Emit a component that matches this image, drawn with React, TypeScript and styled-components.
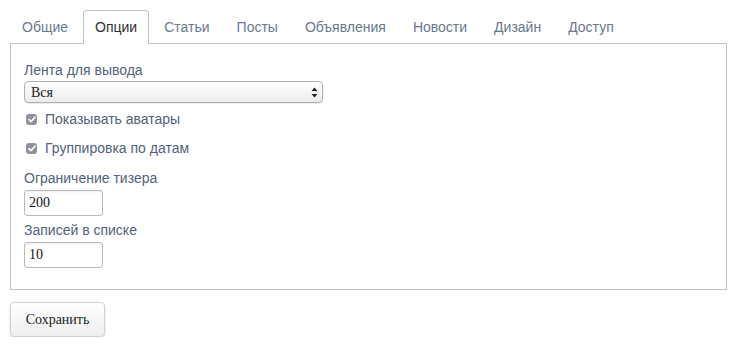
import * as React from 'react';
import styled, { createGlobalStyle } from 'styled-components';

const GlobalStyle = createGlobalStyle`
  html, body {
    margin: 0;
    padding: 0;
    background: #fff;
  }
  body {
    font-family: "Liberation Sans", Arial, sans-serif;
  }
`;

const Page = styled.div`
  padding: 10px 11px 0 10px;
`;

const TabBar = styled.ul`
  display: flex;
  list-style: none;
  margin: 0;
  padding: 0;
`;

const Tab = styled.li<{ active?: boolean }>`
  height: 34px;
  box-sizing: border-box;
  padding: 0 11px 1px 11px;
  margin-right: 3px;
  display: flex;
  align-items: center;
  font-size: 14px;
  color: ${p => (p.active ? '#2b2f36' : '#6a7890')};
  border: 1px solid ${p => (p.active ? '#b9c3cd' : 'transparent')};
  border-bottom: 0;
  border-radius: 4px 4px 0 0;
  background: ${p => (p.active ? '#fff' : 'transparent')};
  margin-bottom: -1px;
  position: relative;
  z-index: ${p => (p.active ? 1 : 0)};
  cursor: pointer;
`;

const Panel = styled.div`
  border: 1px solid #b9c3cd;
  height: 247px;
  box-sizing: border-box;
  padding: 17px 13px 0 13px;
  display: flex;
  flex-direction: column;
`;

const Label = styled.div<{ gap?: number }>`
  font-size: 14px;
  color: #52627a;
  line-height: 18px;
  margin-top: ${p => p.gap ?? 0}px;
`;

const SelectWrap = styled.div`
  position: relative;
  width: 299px;
  margin-top: 2px;
`;

const Select = styled.select`
  appearance: none;
  width: 100%;
  height: 22px;
  border: 1px solid #aab0b8;
  border-radius: 4px;
  background: linear-gradient(#ffffff, #ececec);
  font-family: "Liberation Serif", "Times New Roman", serif;
  font-weight: 400;
  font-size: 14px;
  color: #222;
  padding: 0 6px;
  box-shadow: 0 1px 1px rgba(0, 0, 0, 0.08);
`;

const Arrows = styled.svg`
  position: absolute;
  right: 5px;
  top: 6px;
  pointer-events: none;
`;

const CheckRow = styled.label<{ gap: number }>`
  display: flex;
  align-items: center;
  gap: 8px;
  margin-left: 2px;
  font-size: 14px;
  color: #52627a;
  height: 18px;
  margin-top: ${p => p.gap}px;
`;

const Box = styled.span`
  width: 11px;
  height: 11px;
  border-radius: 3px;
  background: #8e9399;
  display: flex;
  align-items: center;
  justify-content: center;
`;

const TextInput = styled.input`
  width: 79px;
  height: 26px;
  box-sizing: border-box;
  margin-top: 3px;
  border: 1px solid #b7bbc0;
  border-radius: 3px;
  box-shadow: inset 0 1px 2px rgba(0, 0, 0, 0.08);
  font-family: "Liberation Serif", "Times New Roman", serif;
  font-size: 14px;
  color: #111;
  padding: 0 4px;
  outline: none;
`;

const SaveButton = styled.button`
  margin-top: 12px;
  width: 95px;
  height: 35px;
  border: 1px solid #cfd2d5;
  border-radius: 4px;
  background: linear-gradient(#ffffff, #eeeeee);
  box-shadow: 0 1px 2px rgba(0, 0, 0, 0.18);
  font-family: "Liberation Serif", "Times New Roman", serif;
  font-size: 14px;
  color: #222;
  cursor: pointer;
`;

const Check = () => (
  <Box>
    <svg width="8" height="7" viewBox="0 0 8 7">
      <path d="M1 3.6 L3 5.6 L7 1.2" fill="none" stroke="#fff" strokeWidth="1.6" strokeLinecap="round" strokeLinejoin="round" />
    </svg>
  </Box>
);

const tabs = ['Общие', 'Опции', 'Статьи', 'Посты', 'Объявления', 'Новости', 'Дизайн', 'Доступ'];

export default function App() {
  return (
    <Page>
      <GlobalStyle />
      <TabBar>
        {tabs.map(t => (
          <Tab key={t} active={t === 'Опции'}>
            {t}
          </Tab>
        ))}
      </TabBar>
      <Panel>
        <Label>Лента для вывода</Label>
        <SelectWrap>
          <Select defaultValue="all">
            <option value="all">Вся</option>
          </Select>
          <Arrows width="7" height="11" viewBox="0 0 7 11">
            <path d="M3.5 0.5 L6.5 4 L0.5 4 Z" fill="#222" />
            <path d="M3.5 10.5 L6.5 7 L0.5 7 Z" fill="#222" />
          </Arrows>
        </SelectWrap>
        <CheckRow gap={7}>
          <Check />
          Показывать аватары
        </CheckRow>
        <CheckRow gap={11}>
          <Check />
          Группировка по датам
        </CheckRow>
        <Label gap={12}>Ограничение тизера</Label>
        <TextInput defaultValue="200" />
        <Label gap={5}>Записей в списке</Label>
        <TextInput defaultValue="10" />
      </Panel>
      <SaveButton>Сохранить</SaveButton>
    </Page>
  );
}
